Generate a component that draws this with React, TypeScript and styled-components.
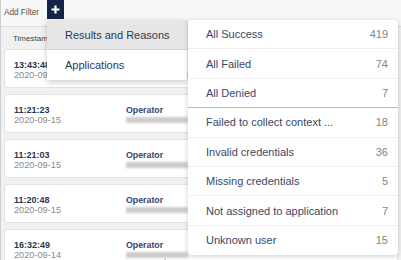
import styled, { createGlobalStyle } from "styled-components";

const GlobalStyle = createGlobalStyle`
  body {
    margin: 0;
    background: #ffffff;
    font-family: "Liberation Sans", Arial, sans-serif;
  }
`;

const Frame = styled.div`
  position: relative;
  width: 401px;
  height: 260px;
  box-sizing: border-box;
  border-left: 1px solid #cfcfcf;
  background: #f1f1f1;
  overflow: hidden;
`;
const Toolbar = styled.div`
  display: flex;
  align-items: flex-start;
  gap: 8px;
  height: 27px;
  box-sizing: border-box;
  padding-left: 3px;
  background: #f7f7f7;
  border-bottom: 1px solid #dcdcdc;
`;
const ToolLabel = styled.span`
  margin-top: 8px;
  font-size: 8.2px;
  line-height: 10px;
  color: #555;
`;
const PlusBtn = styled.button`
  display: flex;
  align-items: center;
  justify-content: center;
  width: 17px;
  height: 19px;
  padding: 0;
  border: none;
  background: #16244a;
`;
const HeaderRow = styled.div`
  height: 22px;
  padding-left: 12px;
  display: flex;
  align-items: center;
  font-size: 8px;
  color: #444;
`;
const CardList = styled.div`
  display: flex;
  flex-direction: column;
  gap: 6px;
  padding: 0 3px;
`;
const Card = styled.div`
  display: grid;
  grid-template-columns: 112px 1fr;
  height: 39px;
  box-sizing: border-box;
  padding: 10px 9px 0;
  background: #fff;
  border: 1px solid #e3e3e3;
  border-radius: 3px;
`;
const Col = styled.div`
  display: flex;
  flex-direction: column;
`;
const Time = styled.span`
  font-size: 9px;
  line-height: 10px;
  font-weight: bold;
  color: #2a3753;
`;
const DateText = styled.span`
  font-size: 9.2px;
  line-height: 10px;
  color: #8a8a8a;
`;
const Label = styled.span`
  font-size: 8.8px;
  line-height: 10px;
  font-weight: bold;
  color: #34446a;
`;
const Hidden = styled.div`
  width: 62px;
  height: 6px;
  margin-top: 2px;
  background: #cdcdcd;
  filter: blur(0.8px);
`;
const Mail = styled.span`
  margin-left: 34px;
  font-size: 6.5px;
  line-height: 7px;
  color: #999;
  filter: blur(0.5px);
`;

const LeftMenu = styled.div`
  position: absolute;
  top: 20px;
  left: 46px;
  width: 140px;
  background: #fff;
  border-radius: 0 0 3px 3px;
  box-shadow: 0 2px 6px rgba(0, 0, 0, 0.22);
`;
const LeftItem = styled.div<{ $active?: boolean }>`
  height: 30px;
  display: flex;
  align-items: center;
  padding-left: 18px;
  font-size: 11px;
  color: #2c3a58;
  background: ${(p) => (p.$active ? "#e6e6e6" : "#fff")};
  border-bottom: ${(p) => (p.$active ? "1px solid #d4d4d4" : "none")};
  box-sizing: border-box;
`;
const RightMenu = styled.div`
  position: absolute;
  top: 20px;
  left: 187px;
  width: 210px;
  background: #fff;
  border-radius: 4px;
  box-shadow: 0 1px 5px rgba(0, 0, 0, 0.2);
`;
const RightItem = styled.div<{ $strong?: boolean; $last?: boolean }>`
  height: 29.4px;
  box-sizing: border-box;
  display: flex;
  align-items: center;
  justify-content: space-between;
  padding: 0 10px 0 18px;
  font-size: 11px;
  color: #3a4763;
  border-bottom: ${(p) =>
    p.$last ? "none" : p.$strong ? "1px solid #b9b9b9" : "1px solid #efefef"};
`;
const Count = styled.span`
  color: #7b8787;
`;

const rows = [
  { time: "13:43:48", date: "2020-09-15" },
  { time: "11:21:23", date: "2020-09-15" },
  { time: "11:21:03", date: "2020-09-15" },
  { time: "11:20:48", date: "2020-09-15" },
  { time: "16:32:49", date: "2020-09-14", mail: true },
];

const reasons = [
  { name: "All Success", count: 419 },
  { name: "All Failed", count: 74 },
  { name: "All Denied", count: 7, strong: true },
  { name: "Failed to collect context ...", count: 18 },
  { name: "Invalid credentials", count: 36 },
  { name: "Missing credentials", count: 5 },
  { name: "Not assigned to application", count: 7 },
  { name: "Unknown user", count: 15 },
];

function App() {
  return (
    <>
      <GlobalStyle />
      <Frame>
        <Toolbar>
          <ToolLabel>Add Filter</ToolLabel>
          <PlusBtn>
            <svg width="9" height="9" viewBox="0 0 9 9">
              <path d="M4.5 0.5v8M0.5 4.5h8" stroke="#fff" strokeWidth="2.2" />
            </svg>
          </PlusBtn>
        </Toolbar>
        <HeaderRow>Timestamp</HeaderRow>
        <CardList>
          {rows.map((r) => (
            <Card key={r.time}>
              <Col>
                <Time>{r.time}</Time>
                <DateText>{r.date}</DateText>
              </Col>
              <Col>
                <Label>Operator</Label>
                <Hidden />
                {r.mail && <Mail>ail.com</Mail>}
              </Col>
            </Card>
          ))}
        </CardList>

        <LeftMenu>
          <LeftItem $active>Results and Reasons</LeftItem>
          <LeftItem>Applications</LeftItem>
        </LeftMenu>

        <RightMenu>
          {reasons.map((r, i) => (
            <RightItem
              key={r.name}
              $strong={r.strong}
              $last={i === reasons.length - 1}
            >
              <span>{r.name}</span>
              <Count>{r.count}</Count>
            </RightItem>
          ))}
        </RightMenu>
      </Frame>
    </>
  );
}

export default App;
